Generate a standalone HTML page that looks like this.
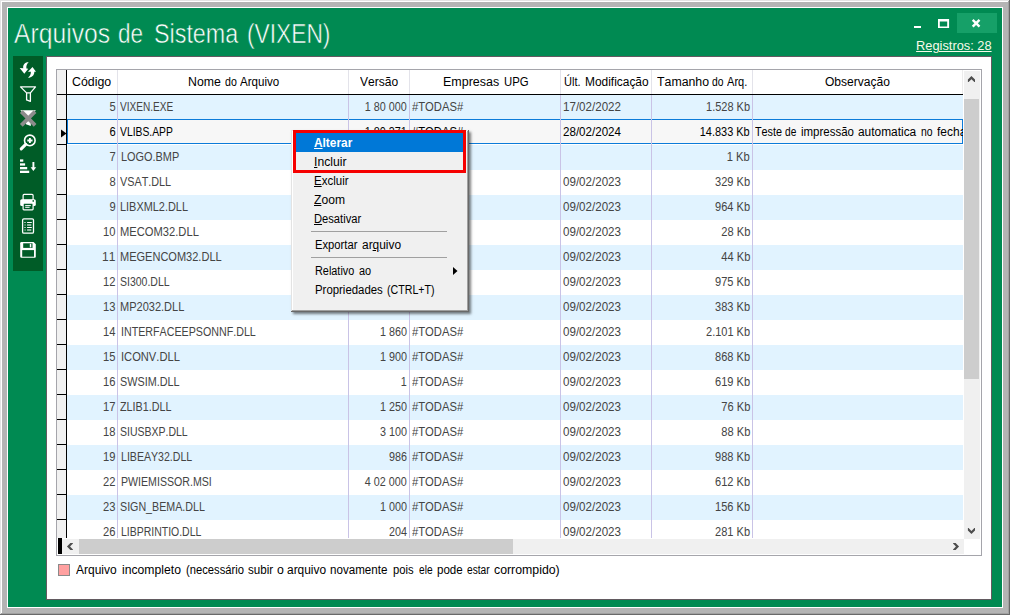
<!DOCTYPE html>
<html lang="pt-BR"><head><meta charset="utf-8"><title>Arquivos de Sistema (VIXEN)</title>
<style>
html,body{margin:0;padding:0;}
body{width:1010px;height:615px;overflow:hidden;position:relative;background:#b4b4b4;font-family:"Liberation Sans",sans-serif;font-kerning:none;}
div,span,svg{position:absolute;box-sizing:border-box;}
.t{white-space:nowrap;display:block;}
.tt{top:0;font-size:27px;line-height:30px;color:#fff;-webkit-text-stroke:0.55px #008a52;transform-origin:0 0;}
.h{white-space:nowrap;font-size:12px;line-height:14px;color:#000;text-align:center;top:75px;}
.vs{top:95px;width:1px;height:443px;background:#c9c3e6;}
.hs{top:70px;width:1px;height:24px;background:#e3e3ea;}
.hd{left:0;top:0;width:0;height:0;}
.il{left:57px;width:9px;height:1px;background:#000;}
u{text-decoration:underline;text-underline-offset:1px;text-decoration-thickness:1px;}
</style></head><body>

<div style="left:0;top:0;width:1010px;height:615px;background:#696969"></div>
<div style="left:0;top:0;width:1009px;height:614px;background:#e3e3e3"></div>
<div style="left:1px;top:1px;width:1008px;height:613px;background:#a0a0a0"></div>
<div style="left:1px;top:1px;width:1007px;height:612px;background:#fff"></div>
<div style="left:2px;top:2px;width:1006px;height:611px;background:#b4b4b4"></div>
<div style="left:7px;top:7px;width:996px;height:601px;background:#fff"></div>
<div id="client" style="left:8px;top:8px;width:994px;height:599px;background:#008a52"></div>
<div id="title" style="left:0;top:18.5px;width:400px;height:32px">
<span class="t tt" style="left:14.10px;transform:scaleX(0.9152)">Arquivos</span> 
<span class="t tt" style="left:118.00px;transform:scaleX(0.8333)">de</span> 
<span class="t tt" style="left:154.20px;transform:scaleX(0.8635)">Sistema</span> 
<span class="t tt" style="left:246.90px;transform:scaleX(0.8424)">(VIXEN)</span> 
</div>
<div style="left:957px;top:13px;width:40px;height:20px;background:#16a068"></div>
<div style="left:914px;top:26px;width:7px;height:2px;background:#fff"></div>
<svg style="left:936px;top:17px" width="16" height="13" viewBox="0 0 16 13"><path fill-rule="evenodd" fill="#fff" d="M2 2.1 H13.1 V11.1 H2 Z M3.8 4.5 V9.6 H11.2 V4.5 Z"/></svg>
<svg style="left:971px;top:18px" width="11" height="11" viewBox="0 0 11 11"><path d="M1.7 1.8 L8.5 8.6 M8.5 1.8 L1.7 8.6" stroke="#fff" stroke-width="2.4" fill="none"/></svg>
<span class="t" style="top:38px;color:#f7fbe9;font-size:13px;line-height:16px;right:18px;transform-origin:100% 0;transform:scaleX(0.9857);"><u>Registros: 28</u></span>
<div id="tb" style="left:13px;top:56px;width:30px;height:215px;background:#005c27"></div>
<svg id="icons" style="left:13px;top:56px" width="30" height="215" viewBox="0 0 30 215">
<g fill="#fff">
<path d="M15.7 6 C12.4 6.1 9.5 8.8 10.3 12.2 L6.7 12.1 L11.3 17.8 L15.2 12.7 L13.4 12.5 C13 10 13.9 7.7 15.7 6 Z"/>
<path d="M19.5 10.9 L23 15.8 L21.3 15.8 C21.6 19.2 18.6 21.8 15 21.8 C16.8 20.4 18 18.4 17.9 15.8 L15 15.7 Z"/>
</g>
<g transform="translate(0 24)"><path d="M7.5 6.9 L22.5 6.9 L17.4 12.9 L17.4 21.3 L13.6 19.9 L13.6 12.9 Z M13.6 12.9 H17.4" fill="none" stroke="#fff" stroke-width="1.3" stroke-linejoin="round"/></g>
<g transform="translate(0 47)"><path d="M7.3 7.2 L22.9 7.2 L17.8 13.5 L17.8 22.9 L13 21.2 L13 13.5 Z" fill="#fff"/>
<path d="M9.7 9.9 L20.7 20.9 M20.7 9.9 L9.7 20.9" stroke="#8c8c8c" stroke-width="3.9" stroke-linecap="square" fill="none"/></g>
<g transform="translate(0 71)" fill="none" stroke="#fff"><circle cx="16.8" cy="13.4" r="5.3" stroke-width="1.6"/>
<path d="M14.3 13.5 H19.5 M16.9 10.9 V16.1" stroke-width="1.9"/>
<path d="M12.7 17.4 L8.2 21.9" stroke-width="3" stroke-linecap="round"/></g>
<g transform="translate(0 94)" fill="#fff"><rect x="7" y="9.4" width="3.3" height="2.3"/><rect x="7" y="13.3" width="5.1" height="2.3"/><rect x="7" y="17" width="7.2" height="2.3"/><rect x="7" y="20.7" width="9.2" height="2.3"/>
<rect x="19.45" y="12" width="1.9" height="6"/><path d="M17.6 17.3 L23.2 17.3 L20.4 21 Z"/></g>
<g transform="translate(0 130)"><rect x="10.1" y="8.4" width="10" height="6" rx="1" fill="none" stroke="#fff" stroke-width="1.2"/>
<rect x="7.2" y="13.2" width="15.6" height="6.9" rx="1.6" fill="#fff"/>
<rect x="10.1" y="17.1" width="10" height="6.7" rx="0.8" fill="#005c27" stroke="#fff" stroke-width="1.2"/>
<rect x="19.5" y="14.2" width="1.5" height="1.5" fill="#005c27"/>
<path d="M12.2 19.6 H17.8 M12.2 21.3 H16.6" stroke="#fff" stroke-width="1" fill="none"/></g>
<g transform="translate(0 155)"><rect x="9.6" y="7.8" width="10.9" height="14.4" rx="1.3" fill="none" stroke="#fff" stroke-width="1.3"/>
<path d="M14.1 11.5 H18.8 M14.1 16.5 H18.8" stroke="#fff" stroke-width="1" fill="none"/><path d="M11.2 11.5 H12.8 M11.2 16.5 H12.8" stroke="#fff" stroke-opacity=".7" stroke-width="1" fill="none"/>
<path d="M14.1 14 H18.3 M14.1 19 H18.3" stroke="#fff" stroke-opacity=".55" stroke-width="1.9" fill="none"/><path d="M11.4 14 H12.8 M11.4 19 H12.8" stroke="#fff" stroke-opacity=".35" stroke-width="1.9" fill="none"/></g>
<g transform="translate(0 179)"><path d="M8.4 7.1 H20.6 L22.8 9.3 V21.8 Q22.8 22.8 21.8 22.8 H8.4 Q7.2 22.8 7.2 21.6 V8.3 Q7.2 7.1 8.4 7.1 Z" fill="#fff"/>
<rect x="10.2" y="8.3" width="9.3" height="4.6" fill="#005c27"/><rect x="16.8" y="8.8" width="1.5" height="3.6" fill="#fff"/>
<rect x="9.2" y="15.1" width="11.8" height="6.6" fill="#005c27"/></g>
</svg>
<div style="left:46px;top:56px;width:946px;height:544px;background:#625a60"></div>
<div style="left:47px;top:57px;width:944px;height:542px;background:#fff"></div>
<div style="left:56px;top:69px;width:926px;height:487px;background:#a5a5ab"></div>
<div style="left:57px;top:70px;width:924px;height:485px;background:#fff"></div>
<div style="left:57px;top:70px;width:9px;height:468px;background:#f1f1f1"></div>
<div style="left:66px;top:70px;width:1px;height:468px;background:#000"></div>
<div style="left:57px;top:94px;width:906px;height:1px;background:#000"></div>
<div class="hd"><span class="t" style="left:72.30px;top:75px;color:#000;font-size:12px;line-height:14px;transform-origin:0 0;transform:scaleX(1.0289);">Código</span></div>
<div class="hd"><span class="t" style="left:187.60px;top:75px;color:#000;font-size:12px;line-height:14px;transform-origin:0 0;transform:scaleX(1.0250);">Nome</span> <span class="t" style="left:224.80px;top:75px;color:#000;font-size:12px;line-height:14px;transform-origin:0 0;transform:scaleX(0.8822);">do</span> <span class="t" style="left:240.20px;top:75px;color:#000;font-size:12px;line-height:14px;transform-origin:0 0;transform:scaleX(0.9644);">Arquivo</span></div>
<div class="hd"><span class="t" style="left:359.80px;top:75px;color:#000;font-size:12px;line-height:14px;transform-origin:0 0;transform:scaleX(1.0033);">Versão</span></div>
<div class="hd"><span class="t" style="left:442.70px;top:75px;color:#000;font-size:12px;line-height:14px;transform-origin:0 0;transform:scaleX(1.0389);">Empresas</span> <span class="t" style="left:503.90px;top:75px;color:#000;font-size:12px;line-height:14px;transform-origin:0 0;transform:scaleX(0.9462);">UPG</span></div>
<div class="hd"><span class="t" style="left:563.70px;top:75px;color:#000;font-size:12px;line-height:14px;transform-origin:0 0;transform:scaleX(0.9222);">Últ.</span> <span class="t" style="left:584.60px;top:75px;color:#000;font-size:12px;line-height:14px;transform-origin:0 0;transform:scaleX(0.9938);">Modificação</span></div>
<div class="hd"><span class="t" style="left:656.60px;top:75px;color:#000;font-size:12px;line-height:14px;transform-origin:0 0;transform:scaleX(1.0268);">Tamanho</span> <span class="t" style="left:712.10px;top:75px;color:#000;font-size:12px;line-height:14px;transform-origin:0 0;transform:scaleX(0.8598);">do</span> <span class="t" style="left:727.40px;top:75px;color:#000;font-size:12px;line-height:14px;transform-origin:0 0;transform:scaleX(0.9227);">Arq.</span></div>
<div class="hd"><span class="t" style="left:825.30px;top:75px;color:#000;font-size:12px;line-height:14px;transform-origin:0 0;transform:scaleX(1.0039);">Observação</span></div>
<div id="rows" style="left:0;top:0;width:963px;height:538px;overflow:hidden">
<div style="left:67px;top:95px;width:896px;height:25px;background:#e1f3ff"></div>
<div class="il" style="top:119px"></div>
<div style="left:67px;top:119px;width:896px;height:25px;background:#f7f7f7;border:1px solid #0c7bd9"></div>
<div class="il" style="top:144px"></div>
<div style="left:67px;top:145px;width:896px;height:25px;background:#e1f3ff"></div>
<div class="il" style="top:169px"></div>
<div class="il" style="top:194px"></div>
<div style="left:67px;top:195px;width:896px;height:25px;background:#e1f3ff"></div>
<div class="il" style="top:219px"></div>
<div class="il" style="top:244px"></div>
<div style="left:67px;top:245px;width:896px;height:25px;background:#e1f3ff"></div>
<div class="il" style="top:269px"></div>
<div class="il" style="top:294px"></div>
<div style="left:67px;top:295px;width:896px;height:25px;background:#e1f3ff"></div>
<div class="il" style="top:319px"></div>
<div class="il" style="top:344px"></div>
<div style="left:67px;top:345px;width:896px;height:25px;background:#e1f3ff"></div>
<div class="il" style="top:369px"></div>
<div class="il" style="top:394px"></div>
<div style="left:67px;top:395px;width:896px;height:25px;background:#e1f3ff"></div>
<div class="il" style="top:419px"></div>
<div class="il" style="top:444px"></div>
<div style="left:67px;top:445px;width:896px;height:25px;background:#e1f3ff"></div>
<div class="il" style="top:469px"></div>
<div class="il" style="top:494px"></div>
<div style="left:67px;top:495px;width:896px;height:25px;background:#e1f3ff"></div>
<div class="il" style="top:519px"></div>
<div class="il" style="top:544px"></div>
</div>
<div class="vs" style="left:117px"></div><div class="hs" style="left:117px"></div>
<div class="vs" style="left:348px"></div><div class="hs" style="left:348px"></div>
<div class="vs" style="left:409px"></div><div class="hs" style="left:409px"></div>
<div class="vs" style="left:560px"></div><div class="hs" style="left:560px"></div>
<div class="vs" style="left:651px"></div><div class="hs" style="left:651px"></div>
<div class="vs" style="left:752px"></div><div class="hs" style="left:752px"></div>
<div class="hs" style="left:962px;background:#ececec"></div>
<div id="rowtext" style="left:0;top:0;width:1010px;height:538px;overflow:hidden;clip-path:inset(0 47px 0 0)">
<span class="t" style="top:100px;color:#444;font-size:12px;line-height:14px;right:894.4px;transform-origin:100% 0;transform:scaleX(0.9305);">5</span>
<span class="t" style="left:120.20px;top:100px;color:#444;font-size:12px;line-height:14px;transform-origin:0 0;transform:scaleX(0.8410);">VIXEN.EXE</span>
<span class="t" style="top:100px;color:#444;font-size:12px;line-height:14px;right:603px;transform-origin:100% 0;transform:scaleX(0.8991);">1 80 000</span>
<span class="t" style="top:100px;color:#444;font-size:12px;line-height:14px;left:412px;transform-origin:0 0;transform:scaleX(0.9363);">#TODAS#</span>
<span class="t" style="top:100px;color:#444;font-size:12px;line-height:14px;left:563px;transform-origin:0 0;transform:scaleX(0.9657);">17/02/2022</span>
<span class="t" style="top:100px;color:#444;font-size:12px;line-height:14px;right:260px;transform-origin:100% 0;transform:scaleX(0.9159);">1.528 Kb</span>
<span class="t" style="top:125px;color:#000;font-size:12px;line-height:14px;right:894.4px;transform-origin:100% 0;transform:scaleX(0.9305);">6</span>
<span class="t" style="left:120.20px;top:125px;color:#000;font-size:12px;line-height:14px;transform-origin:0 0;transform:scaleX(0.8603);">VLIBS.APP</span>
<span class="t" style="top:125px;color:#000;font-size:12px;line-height:14px;right:603px;transform-origin:100% 0;transform:scaleX(0.8991);">1 80 371</span>
<span class="t" style="top:125px;color:#000;font-size:12px;line-height:14px;left:412px;transform-origin:0 0;transform:scaleX(0.9363);">#TODAS#</span>
<span class="t" style="top:125px;color:#000;font-size:12px;line-height:14px;left:563px;transform-origin:0 0;transform:scaleX(0.9657);">28/02/2024</span>
<span class="t" style="top:125px;color:#000;font-size:12px;line-height:14px;right:260px;transform-origin:100% 0;transform:scaleX(0.9138);">14.833 Kb</span>
<span class="t" style="left:755.40px;top:125px;color:#000;font-size:12px;line-height:14px;transform-origin:0 0;transform:scaleX(0.9013);">Teste</span> <span class="t" style="left:784.90px;top:125px;color:#000;font-size:12px;line-height:14px;transform-origin:0 0;transform:scaleX(0.8449);">de</span> <span class="t" style="left:800.50px;top:125px;color:#000;font-size:12px;line-height:14px;transform-origin:0 0;transform:scaleX(0.9571);">impressão</span> <span class="t" style="left:857.80px;top:125px;color:#000;font-size:12px;line-height:14px;transform-origin:0 0;transform:scaleX(0.9923);">automatica</span> <span class="t" style="left:921.00px;top:125px;color:#000;font-size:12px;line-height:14px;transform-origin:0 0;transform:scaleX(0.8673);">no</span> <span class="t" style="left:936.90px;top:125px;color:#000;font-size:12px;line-height:14px;transform-origin:0 0;transform:scaleX(0.9976);">fechamento</span>
<span class="t" style="top:150px;color:#444;font-size:12px;line-height:14px;right:894.4px;transform-origin:100% 0;transform:scaleX(0.9305);">7</span>
<span class="t" style="left:121.00px;top:150px;color:#444;font-size:12px;line-height:14px;transform-origin:0 0;transform:scaleX(0.9094);">LOGO.BMP</span>
<span class="t" style="top:150px;color:#444;font-size:12px;line-height:14px;right:260px;transform-origin:100% 0;transform:scaleX(0.9317);">1 Kb</span>
<span class="t" style="top:175px;color:#444;font-size:12px;line-height:14px;right:894.4px;transform-origin:100% 0;transform:scaleX(0.9305);">8</span>
<span class="t" style="left:120.20px;top:175px;color:#444;font-size:12px;line-height:14px;transform-origin:0 0;transform:scaleX(0.9009);">VSAT.DLL</span>
<span class="t" style="top:175px;color:#444;font-size:12px;line-height:14px;left:563px;transform-origin:0 0;transform:scaleX(0.9657);">09/02/2023</span>
<span class="t" style="top:175px;color:#444;font-size:12px;line-height:14px;right:260px;transform-origin:100% 0;transform:scaleX(0.9202);">329 Kb</span>
<span class="t" style="top:200px;color:#444;font-size:12px;line-height:14px;right:894.4px;transform-origin:100% 0;transform:scaleX(0.9305);">9</span>
<span class="t" style="left:120.30px;top:200px;color:#444;font-size:12px;line-height:14px;transform-origin:0 0;transform:scaleX(0.9097);">LIBXML2.DLL</span>
<span class="t" style="top:200px;color:#444;font-size:12px;line-height:14px;left:563px;transform-origin:0 0;transform:scaleX(0.9657);">09/02/2023</span>
<span class="t" style="top:200px;color:#444;font-size:12px;line-height:14px;right:260px;transform-origin:100% 0;transform:scaleX(0.9202);">964 Kb</span>
<span class="t" style="top:225px;color:#444;font-size:12px;line-height:14px;right:894.4px;transform-origin:100% 0;transform:scaleX(0.9305);">10</span>
<span class="t" style="left:120.30px;top:225px;color:#444;font-size:12px;line-height:14px;transform-origin:0 0;transform:scaleX(0.9310);">MECOM32.DLL</span>
<span class="t" style="top:225px;color:#444;font-size:12px;line-height:14px;left:563px;transform-origin:0 0;transform:scaleX(0.9657);">09/02/2023</span>
<span class="t" style="top:225px;color:#444;font-size:12px;line-height:14px;right:260px;transform-origin:100% 0;transform:scaleX(0.9248);">28 Kb</span>
<span class="t" style="top:250px;color:#444;font-size:12px;line-height:14px;right:894.4px;transform-origin:100% 0;transform:scaleX(0.9970);">11</span>
<span class="t" style="left:120.30px;top:250px;color:#444;font-size:12px;line-height:14px;transform-origin:0 0;transform:scaleX(0.9183);">MEGENCOM32.DLL</span>
<span class="t" style="top:250px;color:#444;font-size:12px;line-height:14px;left:563px;transform-origin:0 0;transform:scaleX(0.9657);">09/02/2023</span>
<span class="t" style="top:250px;color:#444;font-size:12px;line-height:14px;right:260px;transform-origin:100% 0;transform:scaleX(0.9248);">44 Kb</span>
<span class="t" style="top:275px;color:#444;font-size:12px;line-height:14px;right:894.4px;transform-origin:100% 0;transform:scaleX(0.9305);">12</span>
<span class="t" style="left:119.80px;top:275px;color:#444;font-size:12px;line-height:14px;transform-origin:0 0;transform:scaleX(0.8740);">SI300.DLL</span>
<span class="t" style="top:275px;color:#444;font-size:12px;line-height:14px;left:563px;transform-origin:0 0;transform:scaleX(0.9657);">09/02/2023</span>
<span class="t" style="top:275px;color:#444;font-size:12px;line-height:14px;right:260px;transform-origin:100% 0;transform:scaleX(0.9202);">975 Kb</span>
<span class="t" style="top:300px;color:#444;font-size:12px;line-height:14px;right:894.4px;transform-origin:100% 0;transform:scaleX(0.9305);">13</span>
<span class="t" style="left:120.30px;top:300px;color:#444;font-size:12px;line-height:14px;transform-origin:0 0;transform:scaleX(0.9186);">MP2032.DLL</span>
<span class="t" style="top:300px;color:#444;font-size:12px;line-height:14px;left:563px;transform-origin:0 0;transform:scaleX(0.9657);">09/02/2023</span>
<span class="t" style="top:300px;color:#444;font-size:12px;line-height:14px;right:260px;transform-origin:100% 0;transform:scaleX(0.9202);">383 Kb</span>
<span class="t" style="top:325px;color:#444;font-size:12px;line-height:14px;right:894.4px;transform-origin:100% 0;transform:scaleX(0.9305);">14</span>
<span class="t" style="left:120.70px;top:325px;color:#444;font-size:12px;line-height:14px;transform-origin:0 0;transform:scaleX(0.8904);">INTERFACEEPSONNF.DLL</span>
<span class="t" style="top:325px;color:#444;font-size:12px;line-height:14px;right:603px;transform-origin:100% 0;transform:scaleX(0.8991);">1 860</span>
<span class="t" style="top:325px;color:#444;font-size:12px;line-height:14px;left:412px;transform-origin:0 0;transform:scaleX(0.9363);">#TODAS#</span>
<span class="t" style="top:325px;color:#444;font-size:12px;line-height:14px;left:563px;transform-origin:0 0;transform:scaleX(0.9657);">09/02/2023</span>
<span class="t" style="top:325px;color:#444;font-size:12px;line-height:14px;right:260px;transform-origin:100% 0;transform:scaleX(0.9159);">2.101 Kb</span>
<span class="t" style="top:350px;color:#444;font-size:12px;line-height:14px;right:894.4px;transform-origin:100% 0;transform:scaleX(0.9305);">15</span>
<span class="t" style="left:120.70px;top:350px;color:#444;font-size:12px;line-height:14px;transform-origin:0 0;transform:scaleX(0.9285);">ICONV.DLL</span>
<span class="t" style="top:350px;color:#444;font-size:12px;line-height:14px;right:603px;transform-origin:100% 0;transform:scaleX(0.8991);">1 900</span>
<span class="t" style="top:350px;color:#444;font-size:12px;line-height:14px;left:412px;transform-origin:0 0;transform:scaleX(0.9363);">#TODAS#</span>
<span class="t" style="top:350px;color:#444;font-size:12px;line-height:14px;left:563px;transform-origin:0 0;transform:scaleX(0.9657);">09/02/2023</span>
<span class="t" style="top:350px;color:#444;font-size:12px;line-height:14px;right:260px;transform-origin:100% 0;transform:scaleX(0.9202);">868 Kb</span>
<span class="t" style="top:375px;color:#444;font-size:12px;line-height:14px;right:894.4px;transform-origin:100% 0;transform:scaleX(0.9305);">16</span>
<span class="t" style="left:119.80px;top:375px;color:#444;font-size:12px;line-height:14px;transform-origin:0 0;transform:scaleX(0.9015);">SWSIM.DLL</span>
<span class="t" style="top:375px;color:#444;font-size:12px;line-height:14px;right:603px;transform-origin:100% 0;transform:scaleX(0.8990);">1</span>
<span class="t" style="top:375px;color:#444;font-size:12px;line-height:14px;left:412px;transform-origin:0 0;transform:scaleX(0.9363);">#TODAS#</span>
<span class="t" style="top:375px;color:#444;font-size:12px;line-height:14px;left:563px;transform-origin:0 0;transform:scaleX(0.9657);">09/02/2023</span>
<span class="t" style="top:375px;color:#444;font-size:12px;line-height:14px;right:260px;transform-origin:100% 0;transform:scaleX(0.9202);">619 Kb</span>
<span class="t" style="top:400px;color:#444;font-size:12px;line-height:14px;right:894.4px;transform-origin:100% 0;transform:scaleX(0.9305);">17</span>
<span class="t" style="left:119.80px;top:400px;color:#444;font-size:12px;line-height:14px;transform-origin:0 0;transform:scaleX(0.8959);">ZLIB1.DLL</span>
<span class="t" style="top:400px;color:#444;font-size:12px;line-height:14px;right:603px;transform-origin:100% 0;transform:scaleX(0.8991);">1 250</span>
<span class="t" style="top:400px;color:#444;font-size:12px;line-height:14px;left:412px;transform-origin:0 0;transform:scaleX(0.9363);">#TODAS#</span>
<span class="t" style="top:400px;color:#444;font-size:12px;line-height:14px;left:563px;transform-origin:0 0;transform:scaleX(0.9657);">09/02/2023</span>
<span class="t" style="top:400px;color:#444;font-size:12px;line-height:14px;right:260px;transform-origin:100% 0;transform:scaleX(0.9248);">76 Kb</span>
<span class="t" style="top:425px;color:#444;font-size:12px;line-height:14px;right:894.4px;transform-origin:100% 0;transform:scaleX(0.9305);">18</span>
<span class="t" style="left:119.80px;top:425px;color:#444;font-size:12px;line-height:14px;transform-origin:0 0;transform:scaleX(0.8751);">SIUSBXP.DLL</span>
<span class="t" style="top:425px;color:#444;font-size:12px;line-height:14px;right:603px;transform-origin:100% 0;transform:scaleX(0.8991);">3 100</span>
<span class="t" style="top:425px;color:#444;font-size:12px;line-height:14px;left:412px;transform-origin:0 0;transform:scaleX(0.9363);">#TODAS#</span>
<span class="t" style="top:425px;color:#444;font-size:12px;line-height:14px;left:563px;transform-origin:0 0;transform:scaleX(0.9657);">09/02/2023</span>
<span class="t" style="top:425px;color:#444;font-size:12px;line-height:14px;right:260px;transform-origin:100% 0;transform:scaleX(0.9248);">88 Kb</span>
<span class="t" style="top:450px;color:#444;font-size:12px;line-height:14px;right:894.4px;transform-origin:100% 0;transform:scaleX(0.9305);">19</span>
<span class="t" style="left:120.70px;top:450px;color:#444;font-size:12px;line-height:14px;transform-origin:0 0;transform:scaleX(0.8814);">LIBEAY32.DLL</span>
<span class="t" style="top:450px;color:#444;font-size:12px;line-height:14px;right:603px;transform-origin:100% 0;transform:scaleX(0.8990);">986</span>
<span class="t" style="top:450px;color:#444;font-size:12px;line-height:14px;left:412px;transform-origin:0 0;transform:scaleX(0.9363);">#TODAS#</span>
<span class="t" style="top:450px;color:#444;font-size:12px;line-height:14px;left:563px;transform-origin:0 0;transform:scaleX(0.9657);">09/02/2023</span>
<span class="t" style="top:450px;color:#444;font-size:12px;line-height:14px;right:260px;transform-origin:100% 0;transform:scaleX(0.9202);">988 Kb</span>
<span class="t" style="top:475px;color:#444;font-size:12px;line-height:14px;right:894.4px;transform-origin:100% 0;transform:scaleX(0.9305);">22</span>
<span class="t" style="left:120.70px;top:475px;color:#444;font-size:12px;line-height:14px;transform-origin:0 0;transform:scaleX(0.8838);">PWIEMISSOR.MSI</span>
<span class="t" style="top:475px;color:#444;font-size:12px;line-height:14px;right:603px;transform-origin:100% 0;transform:scaleX(0.8991);">4 02 000</span>
<span class="t" style="top:475px;color:#444;font-size:12px;line-height:14px;left:412px;transform-origin:0 0;transform:scaleX(0.9363);">#TODAS#</span>
<span class="t" style="top:475px;color:#444;font-size:12px;line-height:14px;left:563px;transform-origin:0 0;transform:scaleX(0.9657);">09/02/2023</span>
<span class="t" style="top:475px;color:#444;font-size:12px;line-height:14px;right:260px;transform-origin:100% 0;transform:scaleX(0.9202);">612 Kb</span>
<span class="t" style="top:500px;color:#444;font-size:12px;line-height:14px;right:894.4px;transform-origin:100% 0;transform:scaleX(0.9305);">23</span>
<span class="t" style="left:120.10px;top:500px;color:#444;font-size:12px;line-height:14px;transform-origin:0 0;transform:scaleX(0.8902);">SIGN_BEMA.DLL</span>
<span class="t" style="top:500px;color:#444;font-size:12px;line-height:14px;right:603px;transform-origin:100% 0;transform:scaleX(0.8991);">1 000</span>
<span class="t" style="top:500px;color:#444;font-size:12px;line-height:14px;left:412px;transform-origin:0 0;transform:scaleX(0.9363);">#TODAS#</span>
<span class="t" style="top:500px;color:#444;font-size:12px;line-height:14px;left:563px;transform-origin:0 0;transform:scaleX(0.9657);">09/02/2023</span>
<span class="t" style="top:500px;color:#444;font-size:12px;line-height:14px;right:260px;transform-origin:100% 0;transform:scaleX(0.9202);">156 Kb</span>
<span class="t" style="top:525px;color:#444;font-size:12px;line-height:14px;right:894.4px;transform-origin:100% 0;transform:scaleX(0.9305);">26</span>
<span class="t" style="left:121.10px;top:525px;color:#444;font-size:12px;line-height:14px;transform-origin:0 0;transform:scaleX(0.8728);">LIBPRINTIO.DLL</span>
<span class="t" style="top:525px;color:#444;font-size:12px;line-height:14px;right:603px;transform-origin:100% 0;transform:scaleX(0.8990);">204</span>
<span class="t" style="top:525px;color:#444;font-size:12px;line-height:14px;left:412px;transform-origin:0 0;transform:scaleX(0.9363);">#TODAS#</span>
<span class="t" style="top:525px;color:#444;font-size:12px;line-height:14px;left:563px;transform-origin:0 0;transform:scaleX(0.9657);">09/02/2023</span>
<span class="t" style="top:525px;color:#444;font-size:12px;line-height:14px;right:260px;transform-origin:100% 0;transform:scaleX(0.9202);">281 Kb</span>
</div>
<svg style="left:60px;top:129px" width="7" height="9" viewBox="0 0 7 9"><path d="M1 0.5 L6.5 4.5 L1 8.5 Z" fill="#000"/></svg>
<div style="left:964px;top:71px;width:16px;height:468px;background:#f0f0f0"></div>
<div style="left:964px;top:99px;width:15px;height:280px;background:#cdcdcd"></div>
<svg style="left:965px;top:73px" width="13" height="13" viewBox="0 0 13 13"><path transform="translate(6.45 6.05) rotate(0)" d="M0 -3 L3.55 0.45 L3.55 3 L2.9 3 L0 0.1 L-2.9 3 L-3.55 3 L-3.55 0.45 Z" fill="#4d4d4d"/></svg>
<svg style="left:965px;top:525px" width="13" height="13" viewBox="0 0 13 13"><path transform="translate(6.45 6.00) rotate(180)" d="M0 -3 L3.55 0.45 L3.55 3 L2.9 3 L0 0.1 L-2.9 3 L-3.55 3 L-3.55 0.45 Z" fill="#4d4d4d"/></svg>
<div style="left:62px;top:539px;width:902px;height:15px;background:#f0f0f0"></div>
<div style="left:58px;top:538px;width:4px;height:16px;background:#000"></div>
<div style="left:79px;top:539px;width:434px;height:15px;background:#cdcdcd"></div>
<svg style="left:63px;top:540px" width="13" height="13" viewBox="0 0 13 13"><path transform="translate(6.95 6.50) rotate(270)" d="M0 -3 L3.55 0.45 L3.55 3 L2.9 3 L0 0.1 L-2.9 3 L-3.55 3 L-3.55 0.45 Z" fill="#4d4d4d"/></svg>
<svg style="left:950px;top:540px" width="13" height="13" viewBox="0 0 13 13"><path transform="translate(6.05 6.50) rotate(90)" d="M0 -3 L3.55 0.45 L3.55 3 L2.9 3 L0 0.1 L-2.9 3 L-3.55 3 L-3.55 0.45 Z" fill="#4d4d4d"/></svg>
<div style="left:58px;top:564px;width:12px;height:12px;background:#ffa0a0;border:1px solid #8a8a8a"></div>
<span class="t" style="left:76.40px;top:563px;color:#000;font-size:12px;line-height:14px;transform-origin:0 0;transform:scaleX(0.9988);">Arquivo</span> <span class="t" style="left:122.30px;top:563px;color:#000;font-size:12px;line-height:14px;transform-origin:0 0;transform:scaleX(1.0155);">incompleto</span> <span class="t" style="left:185.80px;top:563px;color:#000;font-size:12px;line-height:14px;transform-origin:0 0;transform:scaleX(0.9339);">(necessário</span> <span class="t" style="left:247.90px;top:563px;color:#000;font-size:12px;line-height:14px;transform-origin:0 0;transform:scaleX(0.9654);">subir</span> <span class="t" style="left:276.90px;top:563px;color:#000;font-size:12px;line-height:14px;transform-origin:0 0;transform:scaleX(1.0264);">o</span> <span class="t" style="left:286.90px;top:563px;color:#000;font-size:12px;line-height:14px;transform-origin:0 0;transform:scaleX(0.9930);">arquivo</span> <span class="t" style="left:330.30px;top:563px;color:#000;font-size:12px;line-height:14px;transform-origin:0 0;transform:scaleX(0.9667);">novamente</span> <span class="t" style="left:393.00px;top:563px;color:#000;font-size:12px;line-height:14px;transform-origin:0 0;transform:scaleX(0.9364);">pois</span> <span class="t" style="left:418.50px;top:563px;color:#000;font-size:12px;line-height:14px;transform-origin:0 0;transform:scaleX(0.8438);">ele</span> <span class="t" style="left:436.60px;top:563px;color:#000;font-size:12px;line-height:14px;transform-origin:0 0;transform:scaleX(0.9645);">pode</span> <span class="t" style="left:466.80px;top:563px;color:#000;font-size:12px;line-height:14px;transform-origin:0 0;transform:scaleX(0.8488);">estar</span> <span class="t" style="left:493.80px;top:563px;color:#000;font-size:12px;line-height:14px;transform-origin:0 0;transform:scaleX(1.0266);">corrompido)</span>
<div id="menu" style="left:291px;top:130px;width:178px;height:182px;background:#696969;box-shadow:2px 2px 2.5px rgba(0,0,0,.5)"></div>
<div style="left:291px;top:130px;width:177px;height:181px;background:#e3e3e3"></div>
<div style="left:292px;top:131px;width:176px;height:180px;background:#a0a0a0"></div>
<div style="left:292px;top:131px;width:175px;height:179px;background:#fff"></div>
<div style="left:293px;top:132px;width:174px;height:178px;background:#f0f0f0"></div>
<div style="left:296px;top:133px;width:167px;height:19px;background:#0078d7"></div>
<div class="hd" id="menuitems">
<span class="t" style="left:314.40px;top:136px;color:#fff;font-size:12px;line-height:14px;transform-origin:0 0;transform:scaleX(0.9890);font-weight:bold;"><u>A</u>lterar</span>
<span class="t" style="left:314.40px;top:155px;color:#000;font-size:12px;line-height:14px;transform-origin:0 0;transform:scaleX(1.0156);"><u>I</u>ncluir</span>
<span class="t" style="left:314.40px;top:174px;color:#000;font-size:12px;line-height:14px;transform-origin:0 0;transform:scaleX(0.9583);"><u>E</u>xcluir</span>
<span class="t" style="left:314.40px;top:193px;color:#000;font-size:12px;line-height:14px;transform-origin:0 0;transform:scaleX(1.0090);"><u>Z</u>oom</span>
<span class="t" style="left:314.40px;top:212px;color:#000;font-size:12px;line-height:14px;transform-origin:0 0;transform:scaleX(0.9304);"><u>D</u>esativar</span>
<span class="t" style="left:314.60px;top:238px;color:#000;font-size:12px;line-height:14px;transform-origin:0 0;transform:scaleX(0.9344);">Exportar</span> <span class="t" style="left:361.50px;top:238px;color:#000;font-size:12px;line-height:14px;transform-origin:0 0;transform:scaleX(0.9930);">ar<u>q</u>uivo</span>
<span class="t" style="left:314.60px;top:264px;color:#000;font-size:12px;line-height:14px;transform-origin:0 0;transform:scaleX(0.9061);">Relativo</span> <span class="t" style="left:359.40px;top:264px;color:#000;font-size:12px;line-height:14px;transform-origin:0 0;transform:scaleX(0.9121);">ao</span>
<span class="t" style="left:314.60px;top:283px;color:#000;font-size:12px;line-height:14px;transform-origin:0 0;transform:scaleX(0.9499);">Propriedades</span> <span class="t" style="left:386.80px;top:283px;color:#000;font-size:12px;line-height:14px;transform-origin:0 0;transform:scaleX(0.8858);">(CTRL+T)</span>
</div>
<div style="left:311px;top:231px;width:136px;height:1px;background:#a0a0a0"></div>
<div style="left:311px;top:257px;width:136px;height:1px;background:#a0a0a0"></div>
<svg style="left:453px;top:267px" width="5" height="8" viewBox="0 0 5 8"><path d="M0 0 L4.5 4 L0 8 Z" fill="#000"/></svg>
<div style="left:293px;top:130px;width:173px;height:43px;border:3px solid #f50000"></div>
</body></html>
